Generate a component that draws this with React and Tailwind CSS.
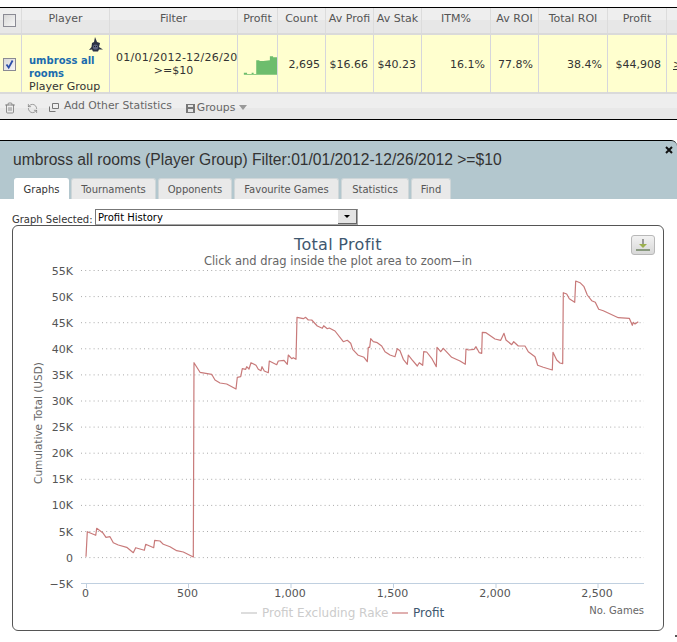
import { RefreshCcw, Trash2 } from 'lucide-react';

const COLUMNAS = 'grid grid-cols-[22px_88px_128px_40px_48px_48px_48px_69px_48px_69px_59px_10px]';

const CABECERAS = ['Player', 'Filter', 'Profit', 'Count', 'Av Profi', 'Av Stak', 'ITM%', 'Av ROI', 'Total ROI', 'Profit'];
const VALORES = ['$16.66', '$40.23', '16.1%', '77.8%', '38.4%', '$44,908'];
const TABS = [
  ['Graphs', 'w-[55px]'],
  ['Tournaments', 'w-[85px]'],
  ['Opponents', 'w-[74px]'],
  ['Favourite Games', 'w-[105px]'],
  ['Statistics', 'w-[68px]'],
  ['Find', 'w-[40px]'],
];

const EJE_Y = ['55K', '50K', '45K', '40K', '35K', '30K', '25K', '20K', '15K', '10K', '5K', '0', '−5K'];
const EJE_X = [['0', 86.5], ['500', 188.5], ['1,000', 291], ['1,500', 393.5], ['2,000', 496], ['2,500', 598]];

const TRAMO_A = [
  [18, 890], [22, 815], [38, 822], [47, 826], [50, 805], [68, 818], [78, 832], [90, 830], [100, 848], [115, 855],
  [140, 862], [160, 878], [167, 863], [193, 871], [197, 853], [221, 863], [224, 841], [240, 843], [250, 853],
  [270, 860], [290, 872], [310, 876], [340, 891], [342, 308], [360, 337], [395, 343], [405, 360], [420, 369],
  [440, 372], [468, 387], [472, 352], [482, 350], [487, 326], [497, 328], [500, 320], [507, 327], [513, 308],
  [528, 316], [535, 328], [543, 332], [546, 320], [553, 333], [565, 338], [568, 303], [590, 314], [595, 303],
  [612, 301], [622, 313], [625, 285], [635, 296], [640, 293], [648, 298], [651, 172], [670, 176], [677, 172],
  [685, 180], [695, 180], [712, 198], [727, 205], [731, 197], [742, 206], [748, 204], [765, 213], [790, 245],
  [802, 241], [812, 250], [818, 268], [835, 286], [852, 292], [862, 305], [865, 262], [869, 262],
];
const TRAMO_B = [
  [2, 236], [10, 245], [22, 248], [35, 258], [45, 275], [60, 285], [75, 290], [82, 266], [90, 272], [100, 298],
  [112, 313], [115, 285], [125, 298], [142, 318], [148, 308], [158, 316], [161, 275], [170, 276], [185, 295],
  [199, 320], [201, 262], [212, 275], [220, 265], [245, 292], [270, 303], [286, 313], [288, 267], [295, 270],
  [312, 268], [318, 260], [328, 278], [335, 280], [337, 217], [348, 218], [375, 237], [392, 241], [402, 220],
  [408, 240], [425, 254], [431, 245], [445, 258], [465, 258], [475, 275], [495, 290], [503, 316], [520, 322],
  [547, 330], [549, 277], [560, 300], [570, 309], [578, 311], [580, 98], [590, 102], [598, 116], [614, 127],
  [617, 63], [630, 68], [642, 80], [652, 105], [665, 122], [676, 127], [686, 148], [700, 152], [745, 173],
  [778, 175], [787, 196], [790, 187], [795, 192], [805, 185],
];

// puntos medidos sobre los recortes a 3x, se pasan a pixeles de pagina
const LINEA = [
  ...TRAMO_A.map(([x, y]) => [x / 3 + 80, y / 3 + 260]),
  ...TRAMO_B.map(([x, y]) => [x / 3 + 370, y / 3 + 260]),
]
  .map(([x, y]) => `${x.toFixed(1)},${y.toFixed(1)}`)
  .join(' ');

function Casilla({ marcada }) {
  return (
    <div className="flex h-[13px] w-[13px] items-center justify-center border border-[#8a8a94] bg-gradient-to-br from-[#d8d8d8] to-[#f6f6f6]">
      {marcada && (
        <svg width="11" height="11" viewBox="0 0 11 11">
          <path d="M2.5 5.5 L4.7 8.6 L8.6 1.5" fill="none" stroke="#2b4fa8" strokeWidth="1.8" />
        </svg>
      )}
    </div>
  );
}

function Tiburon() {
  return (
    <svg width="14" height="15" viewBox="0 0 14 15">
      <path d="M6 0 L8 5 L11 6 L10 10 L14 12.5 L10 12.5 L9 14.5 L4 14.5 L3 12.5 L0 13 L2.5 10 L3 6 L5 5 Z" fill="#2a3044" />
      <circle cx="6.5" cy="10" r="2.6" fill="#5b6280" />
      <path d="M5 9 L6 10 M8 9 L7 10" stroke="#1b1f2e" strokeWidth="1" />
    </svg>
  );
}

function Sparkline() {
  return (
    <svg width="40" height="19" viewBox="0 0 40 19" className="mt-[2px]">
      <polygon
        points="6,19 6,17 9.3,17 9.3,18.3 14,18.3 14,17 16,17 16,18.3 18.7,18.3 18.7,4 22,4 22,5 26,5 26,5 32.7,4 32.7,0 36,0 36,1 40,1 40,19"
        fill="#6dbd6d"
      />
    </svg>
  );
}

function Grafica() {
  return (
    <svg width="650" height="404" viewBox="13 226 650 404" className="block" style={{ fontFamily: '"DejaVu Sans", sans-serif' }}>
      <text x="338" y="250" textAnchor="middle" fontSize="16" fill="#3e576f" letterSpacing="0.3">Total Profit</text>
      <text x="338" y="265" textAnchor="middle" fontSize="11.5" fill="#666666">Click and drag inside the plot area to zoom−in</text>

      {EJE_Y.map((valor, i) => {
        const y = 270.5 + i * 26.1;
        return (
          <g key={valor}>
            {i < 12 && <line x1="81" x2="644" y1={y} y2={y} stroke="#aaaaaa" strokeDasharray="1 3.2" />}
            <text x="73" y={y + 4} textAnchor="end" fontSize="11" fill="#555555">{valor}</text>
          </g>
        );
      })}

      <line x1="81" x2="644" y1="583.5" y2="583.5" stroke="#c0d0e0" />
      {EJE_X.map(([valor, x]) => (
        <g key={valor}>
          <line x1={x} x2={x} y1="584" y2="588" stroke="#c0d0e0" />
          <text x={x - 1} y="597" textAnchor="middle" fontSize="11" fill="#555555">{valor}</text>
        </g>
      ))}

      <polyline points={LINEA} fill="none" stroke="#c87a7a" strokeWidth="1.2" strokeLinejoin="round" />

      <text transform="translate(42 423) rotate(-90)" textAnchor="middle" fontSize="10.5" fill="#666666">Cumulative Total (USD)</text>
      <text x="644" y="614" textAnchor="end" fontSize="10" fill="#666666">No. Games</text>

      <line x1="241" x2="257" y1="613" y2="613" stroke="#dddddd" strokeWidth="2" />
      <text x="262" y="617" fontSize="12" fill="#cccccc">Profit Excluding Rake</text>
      <line x1="392" x2="408" y1="613" y2="613" stroke="#e0b0b0" strokeWidth="2" />
      <text x="413" y="617" fontSize="12" fill="#3e576f">Profit</text>
    </svg>
  );
}

export default function App() {
  return (
    <div className="relative h-[642px] w-[677px] overflow-hidden bg-white pt-[7px] font-['DejaVu_Sans',sans-serif] text-[11px] text-[#333]">
      {/* Tabla de jugadores */}
      <div className="border-y border-black">
        <div className={`${COLUMNAS} h-[25px] bg-[linear-gradient(#eeeeee_50%,#e7e7e7_50%)] text-[#555]`}>
          <div className="flex items-center justify-start border-r border-[#dcdcdc] pl-[3px]">
            <Casilla />
          </div>
          {CABECERAS.map((cabecera, i) => (
            <div key={i} className="flex items-center justify-center overflow-hidden whitespace-nowrap border-r border-[#dcdcdc] pb-[2px]">
              {cabecera}
            </div>
          ))}
          <div />
        </div>

        <div className={`${COLUMNAS} h-[61px] border-y-2 border-y-[#dadada] bg-[#ffffcf] text-[#333]`}>
          <div className="flex items-center border-r border-[#d6d6dc] pl-[3px]">
            <Casilla marcada />
          </div>
          <div className="border-r border-[#d6d6dc] pl-[7px] pr-[6px] pt-[2px] leading-[13px]">
            <div className="mb-[2px] flex justify-end">
              <Tiburon />
            </div>
            <div className="text-[10px] font-bold text-[#1a6cae]">umbross all rooms</div>
            <div>Player Group</div>
          </div>
          <div className="flex flex-col justify-center whitespace-nowrap border-r border-[#d6d6dc] pb-[1px] pl-[6px] leading-[13px]">
            <div className="tracking-[0.25px]">01/01/2012-12/26/20</div>
            <div className="-ml-[6px] text-center">&gt;=$10</div>
          </div>
          <div className="flex items-center justify-end border-r border-[#d6d6dc]">
            <Sparkline />
          </div>
          <div className="flex items-center justify-end border-r border-[#d6d6dc] pr-[5px] pt-[2px]">2,695</div>
          {VALORES.map((valor) => (
            <div key={valor} className="flex items-center justify-end overflow-hidden border-r border-[#d6d6dc] pr-[5px] pt-[2px]">
              {valor}
            </div>
          ))}
          <div className="flex items-center overflow-hidden pl-[6px] pt-[2px] underline">&gt;</div>
        </div>

        <div className="flex h-[25px] items-center bg-[linear-gradient(#eeeeee_55%,#e8e8e8_55%)] text-[10.8px] text-[#666]">
          <Trash2 size={12} strokeWidth={1.6} className="ml-[4px] mt-[3px] text-[#777]" />
          <RefreshCcw size={11} strokeWidth={1.5} className="ml-[11px] mt-[3px] text-[#777]" />
          <svg width="10" height="9" viewBox="0 0 10 9" className="ml-[11px] mt-[2px]">
            <path d="M3.5 .5h6v5h-6z M.5 3.5v5h6" fill="none" stroke="#777777" />
          </svg>
          <span className="ml-[5px] mt-[-1px]">Add Other Statistics</span>
          <svg width="9" height="9" viewBox="0 0 9 9" className="ml-[14px] mt-[3px]">
            <path d="M0 0h9v9H0z" fill="#777777" />
            <path d="M2 1h5v2H2z M2 5h5v3H2z" fill="#e4e4e4" />
          </svg>
          <span className="ml-[2px] mt-[3px]">Groups</span>
          <svg width="8" height="5" viewBox="0 0 8 5" className="ml-[4px] mt-[1px]">
            <path d="M0 0h8L4 5z" fill="#999999" />
          </svg>
        </div>
      </div>

      {/* Panel de detalle */}
      <div className="relative mt-[20px] flex h-[59px] flex-col justify-between rounded-tr-[6px] border-t border-black bg-[#b3c7ce]">
        <div className="pl-[13px] pt-[9px] font-['Liberation_Sans',sans-serif] text-[15.65px] leading-[20px] text-[#333]">
          umbross all rooms (Player Group) Filter:01/01/2012-12/26/2012 &gt;=$10
        </div>
        <svg width="8" height="8" viewBox="0 0 8 8" className="absolute right-[4px] top-[5px]">
          <path d="M1 1 L7 7 M7 1 L1 7" stroke="#111111" strokeWidth="2" />
        </svg>
        <div className="flex items-end gap-[2px] pl-[14px] text-[10px]">
          {TABS.map(([tab, ancho], i) => (
            <div
              key={tab}
              className={`flex h-[21px] items-center justify-center rounded-t-[3px] border border-b-0 ${ancho} ${
                i === 0 ? 'border-white bg-white text-[#333]' : 'border-[#cfd6d8] bg-[#e9e9e9] text-[#555]'
              }`}
            >
              {tab}
            </div>
          ))}
        </div>
      </div>

      <div className="flex h-[26px] items-start pl-[12px] pt-[10px] text-[10px]">
        <span className="mt-[3px] w-[83px] whitespace-nowrap">Graph Selected:</span>
        <div className="flex h-[16px] w-[263px] items-center justify-between border border-[#a8a8a8] border-t-[#777] border-l-[#777] bg-white pl-[2px] text-black">
          <span>Profit History</span>
          <div className="flex h-[14px] w-[19px] items-center justify-center border-r border-b border-[#666] bg-[#e4e4e4]">
            <svg width="6" height="3" viewBox="0 0 6 3">
              <path d="M0 0h6L3 3z" fill="#000000" />
            </svg>
          </div>
        </div>
      </div>

      <div className="relative ml-[12px] w-[652px] rounded-[6px] border border-[#555]">
        <Grafica />
        <div className="absolute right-[8px] top-[9px] flex h-[20px] w-[24px] items-center justify-center rounded-[3px] border border-[#b8b8b8] bg-gradient-to-b from-[#f2f2f2] to-[#d8d8d8]">
          <svg width="14" height="13" viewBox="0 0 14 13">
            <path d="M7 0v5" stroke="#999999" strokeWidth="2" />
            <path d="M3 5h8L7 9z" fill="#9bb04e" />
            <path d="M0 10h14v2H0z" fill="#8a9a80" />
          </svg>
        </div>
      </div>

      <div className="absolute left-[675px] top-[635px] h-[2px] w-[2px] bg-[#555]" />
    </div>
  );
}
